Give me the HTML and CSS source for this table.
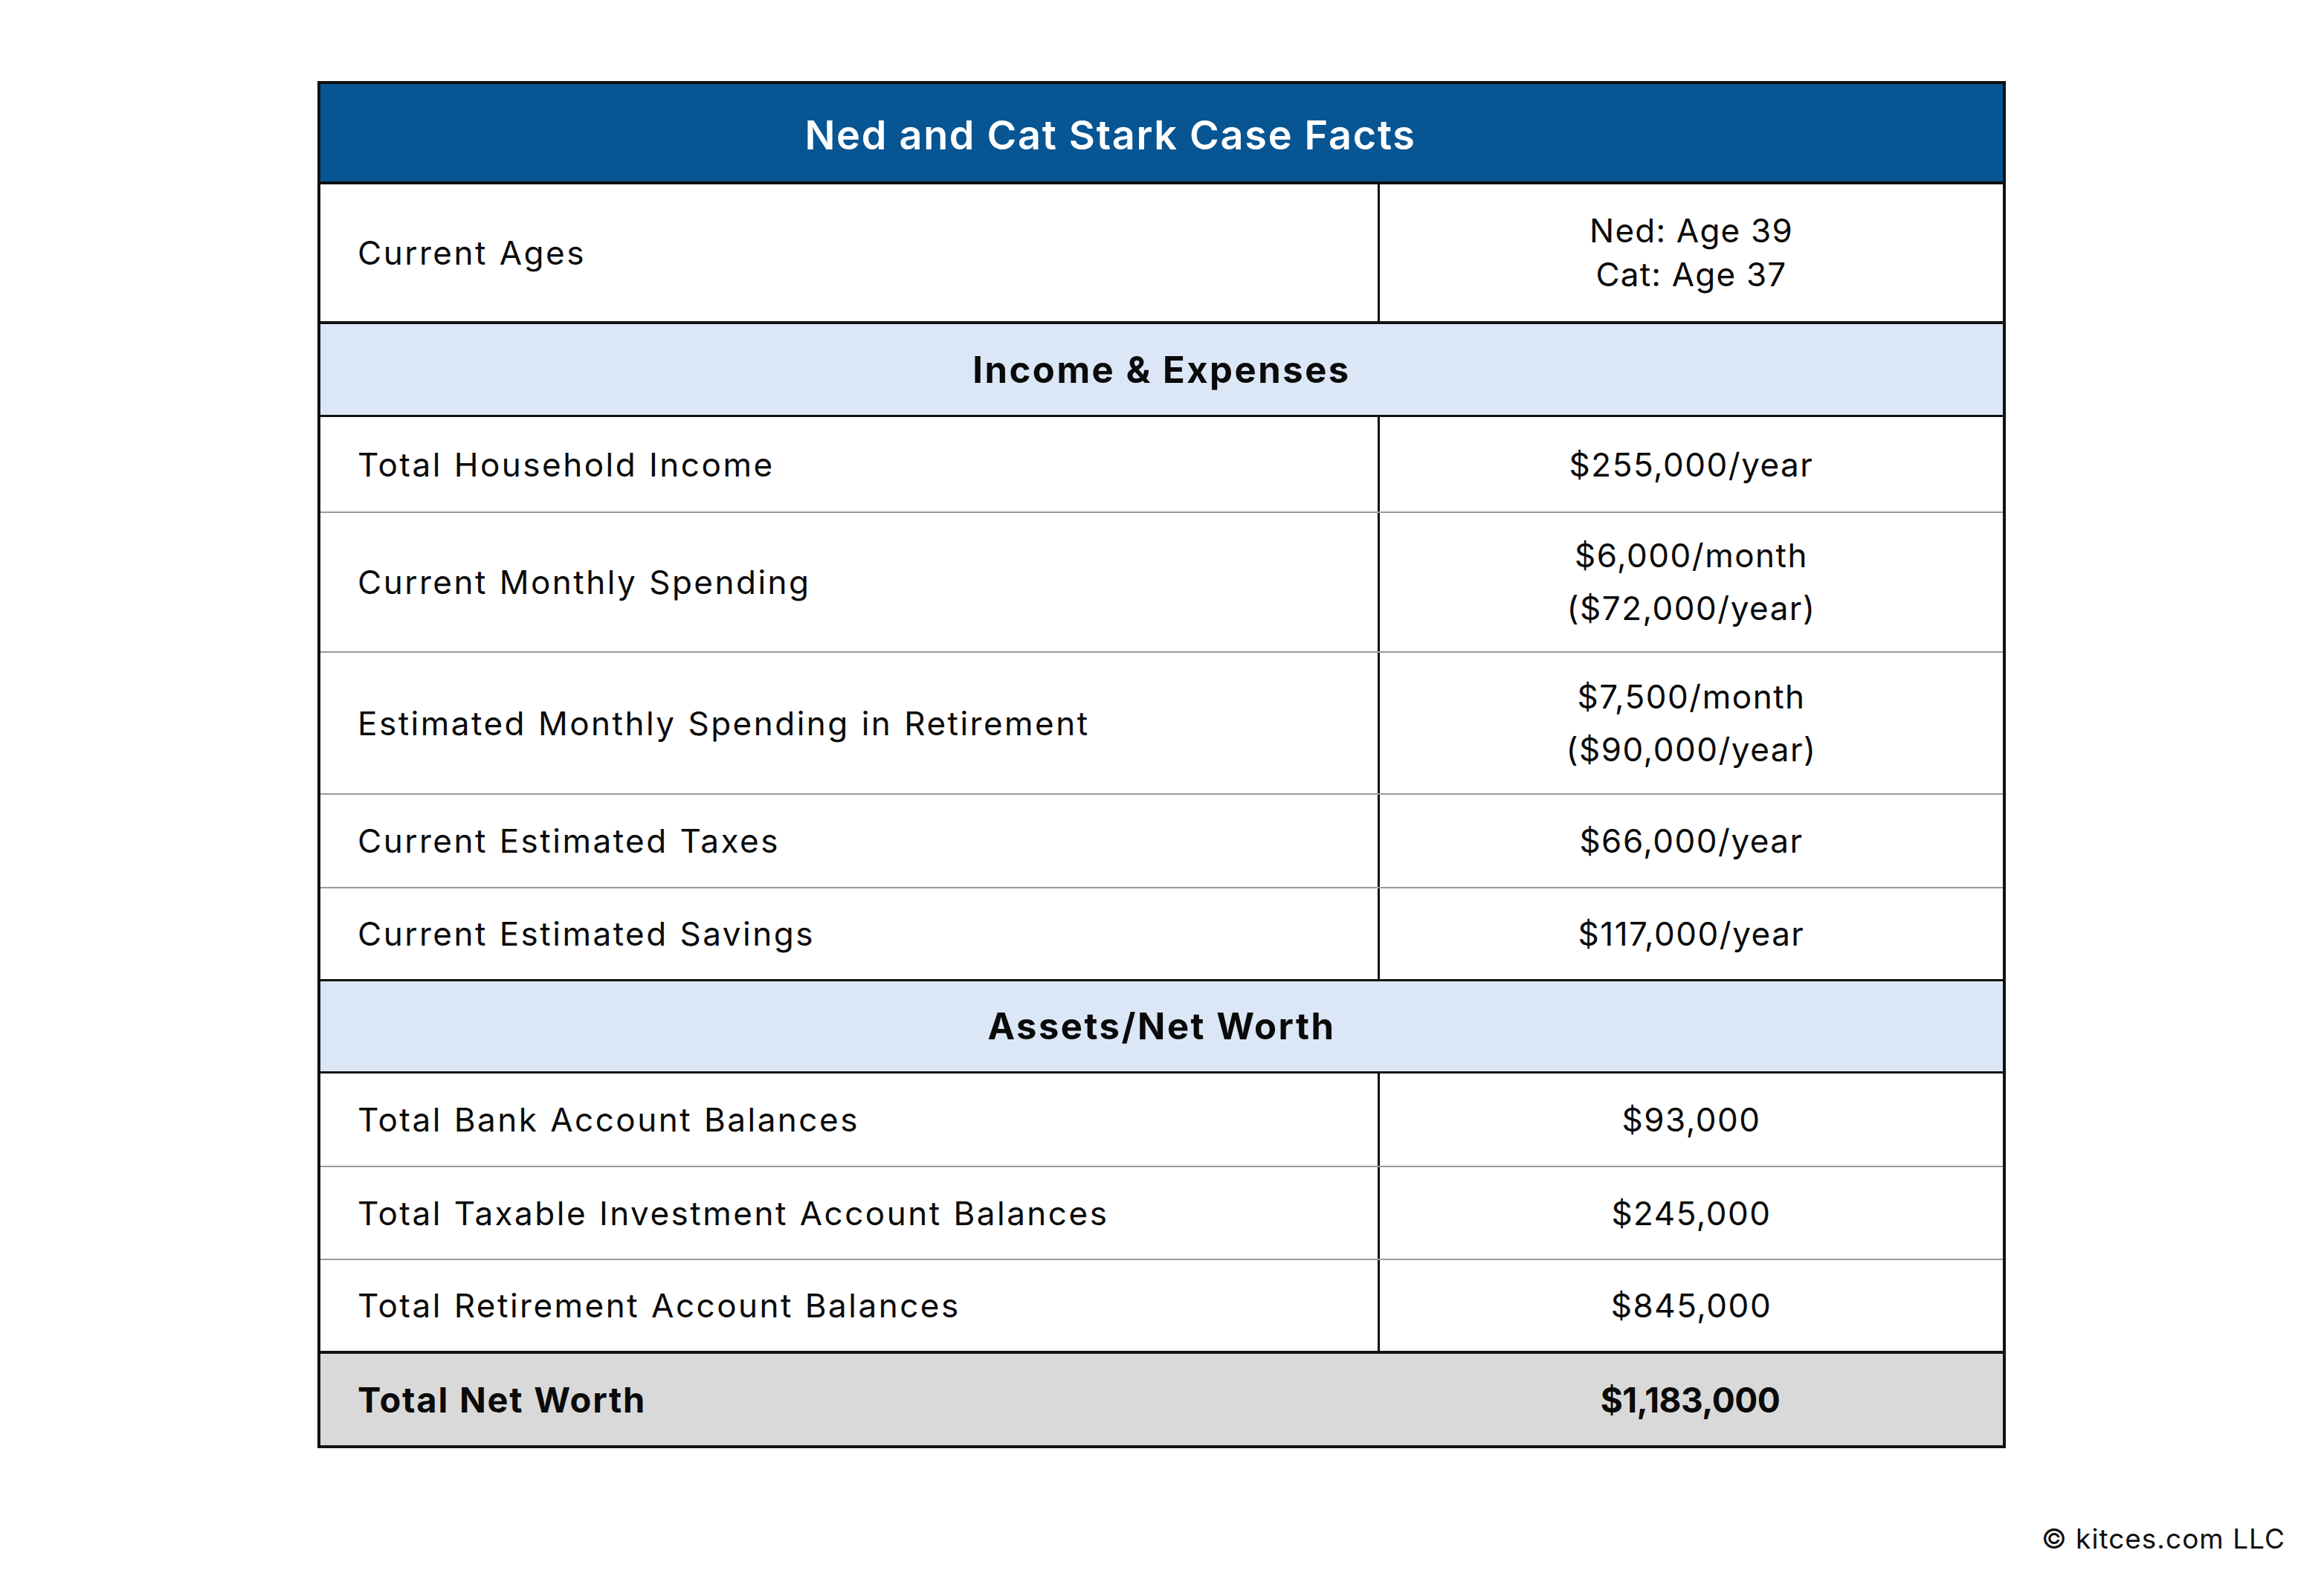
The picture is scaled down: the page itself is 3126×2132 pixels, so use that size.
FILE: index.html
```html
<!DOCTYPE html>
<html lang="en">
<head>
<meta charset="utf-8">
<title>Ned and Cat Stark Case Facts</title>
<link rel="stylesheet" href="styles.css">
</head>
<body>
<main class="page">
  <section class="sheet">
    <div class="title"><span>Ned and Cat Stark Case Facts</span></div>

    <div class="row ages black">
      <div class="label">Current Ages</div>
      <div class="value pair"><span>Ned: Age 39</span><span>Cat: Age 37</span></div>
    </div>

    <div class="section black-thin">Income &amp; Expenses</div>

    <div class="row r127 grey">
      <div class="label">Total Household Income</div>
      <div class="value">$255,000/year</div>
    </div>
    <div class="row r186 grey">
      <div class="label">Current Monthly Spending</div>
      <div class="value two"><span>$6,000/month</span><span>($72,000/year)</span></div>
    </div>
    <div class="row r189 grey">
      <div class="label">Estimated Monthly Spending in Retirement</div>
      <div class="value two"><span>$7,500/month</span><span>($90,000/year)</span></div>
    </div>
    <div class="row r124 grey">
      <div class="label">Current Estimated Taxes</div>
      <div class="value">$66,000/year</div>
    </div>
    <div class="row r122 black-thin">
      <div class="label">Current Estimated Savings</div>
      <div class="value">$117,000/year</div>
    </div>

    <div class="section s121 black-thin">Assets/Net Worth</div>

    <div class="row r124 grey">
      <div class="label">Total Bank Account Balances</div>
      <div class="value">$93,000</div>
    </div>
    <div class="row r123 grey">
      <div class="label">Total Taxable Investment Account Balances</div>
      <div class="value">$245,000</div>
    </div>
    <div class="row r122 black">
      <div class="label">Total Retirement Account Balances</div>
      <div class="value">$845,000</div>
    </div>

    <div class="row r123 total">
      <div class="label">Total Net Worth</div>
      <div class="value">$1,183,000</div>
    </div>
  </section>
  <footer class="credit">© kitces.com LLC</footer>
</main>
</body>
</html>
```

FILE: styles.css
```css
html, body {
  margin: 0;
  padding: 0;
  background: #ffffff;
}

body {
  font-family: "Inter", "Liberation Sans", sans-serif;
  color: #0a0a0a;
}

.page {
  width: 3126px;
  height: 2132px;
  padding-top: 109px;
  box-sizing: border-box;
}

.sheet {
  margin-left: 427px;
  width: 2271px;
  border: 4px solid #111111;
  box-sizing: border-box;
  display: flex;
  flex-direction: column;
}

.title {
  height: 135px;
  box-sizing: border-box;
  padding-top: 6px;
  background: #075592;
  border-bottom: 4px solid #111111;
  display: flex;
  align-items: center;
  justify-content: center;
  padding-right: 138px;
  color: #ffffff;
  font-size: 54px;
  font-weight: 600;
  letter-spacing: 1.7px;
}

.row {
  display: flex;
  font-size: 44px;
  letter-spacing: 2.5px;
}

.row.ages { height: 184px; }
.row.r122 { height: 122px; }
.row.r123 { height: 123px; }
.row.r124 { height: 124px; }
.row.r127 { height: 127px; }
.row.r186 { height: 186px; }
.row.r189 { height: 189px; }

.grey { border-bottom: 2px solid #9a9a9a; }
.black { border-bottom: 4px solid #111111; }
.black-thin { border-bottom: 3px solid #111111; }

.label {
  width: 1422px;
  flex: none;
  box-sizing: border-box;
  padding-left: 50px;
  display: flex;
  align-items: center;
  word-spacing: 1px;
}

.value {
  flex: 1;
  border-left: 3px solid #111111;
  display: flex;
  flex-direction: column;
  align-items: center;
  justify-content: center;
  text-align: center;
  letter-spacing: 1.5px;
}

.value.pair { line-height: 59px; letter-spacing: 1.2px; }
.value.two { line-height: 71px; }

.section {
  height: 122px;
  background: #dbe7f6;
  display: flex;
  align-items: center;
  justify-content: center;
  font-size: 49px;
  font-weight: 700;
  letter-spacing: 2.5px;
}

.section.s121 { height: 121px; }

.total {
  background: #d9d9d9;
  font-weight: 700;
  font-size: 47px;
  letter-spacing: 1.8px;
}

.total .value {
  border-left: none;
  font-size: 46px;
  letter-spacing: -0.5px;
}

.credit {
  margin-top: 103px;
  padding-right: 52px;
  text-align: right;
  font-size: 37px;
  line-height: 1;
  letter-spacing: 1px;
  color: #111111;
}
```
